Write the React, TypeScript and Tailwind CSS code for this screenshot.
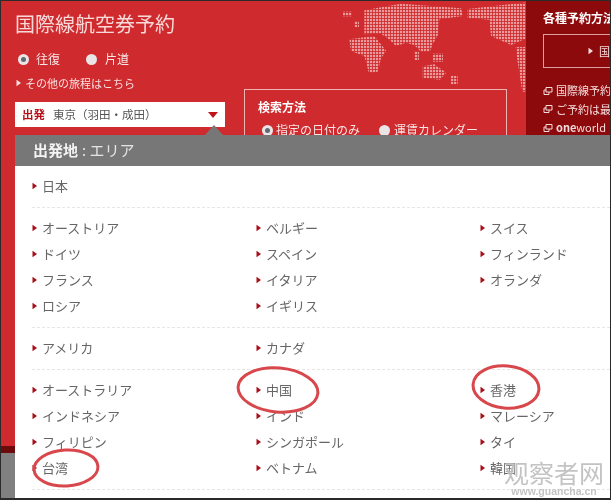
/**
 * International flight booking - departure area dropdown
 */

const font = { fontFamily: '"Noto Sans CJK JP", "Noto Sans", sans-serif' };

const groups: string[][][] = [
  [['日本']],
  [
    ['オーストリア', 'ベルギー', 'スイス'],
    ['ドイツ', 'スペイン', 'フィンランド'],
    ['フランス', 'イタリア', 'オランダ'],
    ['ロシア', 'イギリス'],
  ],
  [['アメリカ', 'カナダ']],
  [
    ['オーストラリア', '中国', '香港'],
    ['インドネシア', 'インド', 'マレーシア'],
    ['フィリピン', 'シンガポール', 'タイ'],
    ['台湾', 'ベトナム', '韓国'],
  ],
];

function Bullet({ className = 'text-[#a80f1a]' }: { className?: string }) {
  return (
    <svg width="5" height="8" viewBox="0 0 5 8" className={`shrink-0 ${className}`}>
      <path d="M0.5 0.8 L5 4 L0.5 7.2 Z" fill="currentColor" />
    </svg>
  );
}

function Radio({ checked }: { checked?: boolean }) {
  return (
    <span className="flex h-[11px] w-[11px] items-center justify-center rounded-full bg-[#e9e4e6]">
      {checked && <span className="h-[5px] w-[5px] rounded-full bg-[#5f6b74]" />}
    </span>
  );
}

function WindowIcon() {
  return (
    <svg width="10" height="10" viewBox="0 0 10 10" className="shrink-0" fill="none" stroke="#f5dcdc" strokeWidth="1">
      <path d="M3 1.5h6v4.5H3z" />
      <path d="M3 4H1v4.5h5V6" />
    </svg>
  );
}

function WorldMap() {
  return (
    <svg width="200" height="92" viewBox="0 0 600 276" className="absolute left-[330px] top-0">
      <defs>
        <pattern id="dots" width="9" height="9" patternUnits="userSpaceOnUse">
          <rect width="6.5" height="6.5" fill="#ea9a9a" />
        </pattern>
      </defs>
      <g fill="url(#dots)">
        <path d="M100 28 L210 8 L390 22 L396 45 L325 55 L322 100 L305 130 L296 152 L270 152 L250 132 L225 125 L195 135 L170 112 L150 98 L100 100 Z" />
        <path d="M410 24 L590 4 L590 110 L540 132 L480 105 L475 56 L410 50 Z" />
        <path d="M55 115 L130 105 L166 150 L150 172 L140 212 L114 216 L100 165 L60 150 Z" />
        <path d="M275 196 L310 190 L346 215 L326 236 L275 230 Z" />
        <path d="M554 138 L590 138 L590 272 L574 272 L560 182 Z" />
        <rect x="36" y="32" width="27" height="14" />
        <rect x="70" y="60" width="14" height="18" />
        <rect x="250" y="150" width="14" height="28" />
        <rect x="306" y="158" width="30" height="24" />
        <rect x="360" y="224" width="20" height="26" />
      </g>
    </svg>
  );
}

export default function App() {
  return (
    <div
      className="relative flex h-[500px] w-[611px] flex-col overflow-hidden border border-b-2 border-[#2a2a2a] bg-[#cf2a2d] blur-[0.4px]"
      style={font}
    >
      <div className="relative flex flex-1 overflow-hidden">
        <WorldMap />
        <div className="relative flex flex-1 pl-[14px]">
          <div className="w-[229px] shrink-0">
            <h1 className="mt-[11px] text-[20px] leading-[24px] text-[#f8d9d9]">国際線航空券予約</h1>
            <div className="mt-[14px] flex h-[18px] items-center text-[12px] text-[#f8e6e6]">
              <span className="ml-[3px]"><Radio checked /></span>
              <span className="ml-[7px]">往復</span>
              <span className="ml-[26px]"><Radio /></span>
              <span className="ml-[8px]">片道</span>
            </div>
            <div className="mt-[7px] flex h-[16px] items-center gap-[4px] pl-[1px] text-[11px] text-[#f8e0e0]">
              <Bullet className="text-[#f8e0e0]" />
              その他の旅程はこちら
            </div>
            <div className="mt-[11px] flex h-[25px] w-[210px] items-center bg-white pl-[7px] pr-[7px] text-[11.5px]">
              <span className="font-bold text-[#b5121b]">出発</span>
              <span className="ml-[8px] text-[#555]">東京（羽田・成田）</span>
              <svg width="10" height="6" viewBox="0 0 10 6" className="ml-auto">
                <path d="M0 0h10L5 6z" fill="#c0131c" />
              </svg>
            </div>
          </div>
          <div className="mt-[88px] h-[80px] w-[263px] shrink-0 border border-[#eeb4b4] px-[17px] py-[9px] text-[#f8e6e6]">
            <div className="-ml-[4px] text-[12px] font-bold leading-[16px] text-white">検索方法</div>
            <div className="mt-[7px] flex items-center text-[12px] leading-[16px]">
              <Radio checked />
              <span className="ml-[3px]">指定の日付のみ</span>
              <span className="ml-[19px]"><Radio /></span>
              <span className="ml-[4px]">運賃カレンダー</span>
            </div>
          </div>
        </div>
        <aside className="relative w-[84px] shrink-0 overflow-hidden bg-[#8c0a0c] pl-[17px] pt-[8px] text-[#f5dcdc]">
          <div className="whitespace-nowrap text-[12px] font-bold leading-[18px] text-white">各種予約方法</div>
          <div className="mt-[7px] flex h-[34px] w-[100px] items-center gap-[6px] border border-[#dca0a0] pl-[44px] text-[11px]">
            <Bullet className="text-[#f5dcdc]" />
            <span className="whitespace-nowrap">国際線</span>
          </div>
          <div className="mt-[14px] space-y-[1.5px] whitespace-nowrap text-[11px] leading-[17px]">
            <div className="flex items-center gap-[3px]"><WindowIcon />国際線予約</div>
            <div className="flex items-center gap-[3px]"><WindowIcon />ご予約は最</div>
            <div className="flex items-center gap-[3px]"><WindowIcon /><span><b>one</b>world</span></div>
          </div>
        </aside>
      </div>
      <div className="h-[7px] shrink-0 bg-[#6d0a0c]" />
      <div className="h-[45px] shrink-0 bg-[#808080]" />

      {/* Departure dropdown */}
      <div className="absolute bottom-0 left-[14px] right-0 top-[134px] flex flex-col">
        <svg width="18" height="10" viewBox="0 0 18 10" className="absolute left-[190px] top-[-10px]">
          <path d="M9 0L18 10H0z" fill="#777777" />
        </svg>
        <div className="flex h-[31px] shrink-0 items-center bg-[#777777] pl-[18px] text-[15px] text-[#e4e4e4]">
          <span className="font-bold text-[#f4f4f4]">出発地</span>
          <span className="ml-[4px]">: エリア</span>
        </div>
        <div className="flex-1 bg-white pl-[17px] pt-[6px] text-[13px] text-[#666]">
          {groups.map((rows, g) => (
            <div key={g} className="mb-[6px] border-b border-dashed border-[#e6e6e6] pb-[8px] pt-[1px]">
              {rows.map((row, r) => (
                <div key={r} className="grid h-[26px] grid-cols-[224px_224px_1fr] items-center">
                  {row.map((name) => (
                    <div key={name} className="flex items-center gap-[5px] whitespace-nowrap">
                      <Bullet />
                      {name}
                    </div>
                  ))}
                </div>
              ))}
            </div>
          ))}
        </div>
      </div>

      {/* Hand-drawn circles over the list */}
      <svg width="611" height="500" viewBox="0 0 611 500" className="pointer-events-none absolute left-[-1px] top-[-1px]" fill="none" stroke="#d8474b" strokeWidth="3">
        <ellipse cx="278" cy="390" rx="40" ry="22" transform="rotate(5 278 390)" />
        <ellipse cx="506" cy="387" rx="33" ry="21" transform="rotate(5 506 387)" />
        <ellipse cx="66" cy="468" rx="32" ry="18" transform="rotate(-3 66 468)" />
      </svg>

      {/* Watermark */}
      <div className="absolute bottom-[1px] right-[6px] flex flex-col items-center text-[#bdbdbd] opacity-90 [text-shadow:0_0_2px_#fff]">
        <span className="text-[25px] leading-[27px]" style={{ fontFamily: '"Noto Sans CJK SC", sans-serif' }}>观察者网</span>
        <span className="text-[10.5px] font-bold leading-[11px]" style={{ fontFamily: '"Liberation Sans", sans-serif' }}>www.guancha.cn</span>
      </div>
    </div>
  );
}
